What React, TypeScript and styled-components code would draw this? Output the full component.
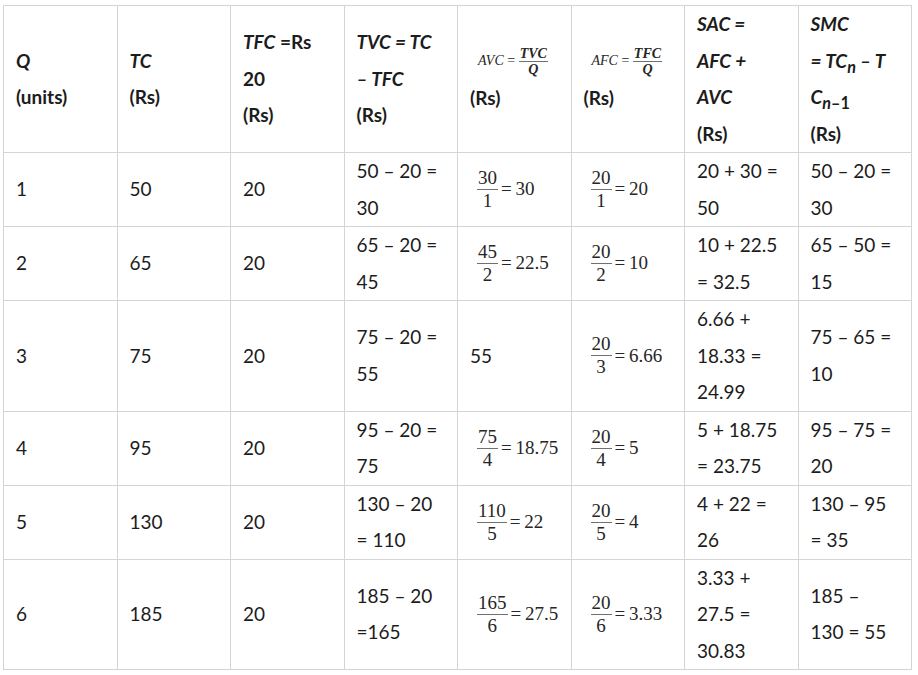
import React from 'react';
import styled, { createGlobalStyle } from 'styled-components';

const GlobalStyle = createGlobalStyle`
    html, body {
        margin: 0;
        padding: 0;
        background: #fff;
    }
    body {
        font-family: Lato, "Open Sans", sans-serif;
        color: #1c1c1c;
    }
`;

const Page = styled.div`
    padding: 5px 0 0 3px;
`;

const Table = styled.table`
    width: 909px;
    table-layout: fixed;
    border-collapse: collapse;
    font-size: 19px;
    line-height: 36.5px;
`;

const Cell = styled.td<{ $head?: boolean }>`
    border: 1px solid #d4d4d4;
    padding: 0 8px 0 12px;
    vertical-align: middle;
    white-space: nowrap;
    font-weight: ${(p) => (p.$head ? 700 : 400)};
`;

const Em = styled.i`
    font-style: italic;
    font-weight: 700;
`;

const Sub = styled.sub`
    font-size: 0.85em;
    line-height: 0;
    vertical-align: -0.3em;
`;

const Formula = styled.span<{ $small?: boolean }>`
    display: inline-flex;
    align-items: center;
    margin-left: ${(p) => (p.$small ? 8 : 7)}px;
    font-family: "Liberation Serif", "Times New Roman", serif;
    font-size: ${(p) => (p.$small ? 14 : 19)}px;
    font-weight: 400;
    color: #262626;
    vertical-align: middle;
`;

const Frac = styled.span<{ $small?: boolean }>`
    display: inline-flex;
    flex-direction: column;
    align-items: center;
    line-height: ${(p) => (p.$small ? 15 : 22)}px;
    margin-right: 3px;
`;

const Num = styled.span<{ $small?: boolean }>`
    padding: 0 1px;
    border-bottom: 1px solid #707070;
    font-style: ${(p) => (p.$small ? 'italic' : 'normal')};
    font-weight: ${(p) => (p.$small ? 700 : 400)};
`;

const Den = styled.span<{ $small?: boolean }>`
    font-style: ${(p) => (p.$small ? 'italic' : 'normal')};
    font-weight: ${(p) => (p.$small ? 700 : 400)};
`;

const Eq = styled.span`
    white-space: pre;
`;

const Fraction: React.FC<{ n: string; d: string; r: string }> = ({ n, d, r }) => (
    <Formula>
        <Frac>
            <Num>{n}</Num>
            <Den>{d}</Den>
        </Frac>
        <Eq>={'\u2009'}{r}</Eq>
    </Formula>
);

const HeadFormula: React.FC<{ name: string; top: string }> = ({ name, top }) => (
    <Formula $small>
        <i>{name}</i>
        <Eq> = </Eq>
        <Frac $small>
            <Num $small>{top}</Num>
            <Den $small>Q</Den>
        </Frac>
    </Formula>
);

const Lines: React.FC<{ lines: string[] }> = ({ lines }) => (
    <>
        {lines.map((l, i) => (
            <React.Fragment key={i}>
                {i > 0 && <br />}
                {l}
            </React.Fragment>
        ))}
    </>
);

type Row = {
    q: string;
    tc: string;
    tvc: string[];
    avc: React.ReactNode;
    afc: React.ReactNode;
    sac: string[];
    smc: string[];
};

const rows: Row[] = [
    {
        q: '1', tc: '50', tvc: ['50 – 20 =', '30'],
        avc: <Fraction n="30" d="1" r="30" />, afc: <Fraction n="20" d="1" r="20" />,
        sac: ['20 + 30 =', '50'], smc: ['50 – 20 =', '30'],
    },
    {
        q: '2', tc: '65', tvc: ['65 – 20 =', '45'],
        avc: <Fraction n="45" d="2" r="22.5" />, afc: <Fraction n="20" d="2" r="10" />,
        sac: ['10 + 22.5', '= 32.5'], smc: ['65 – 50 =', '15'],
    },
    {
        q: '3', tc: '75', tvc: ['75 – 20 =', '55'],
        avc: '55', afc: <Fraction n="20" d="3" r="6.66" />,
        sac: ['6.66 +', '18.33 =', '24.99'], smc: ['75 – 65 =', '10'],
    },
    {
        q: '4', tc: '95', tvc: ['95 – 20 =', '75'],
        avc: <Fraction n="75" d="4" r="18.75" />, afc: <Fraction n="20" d="4" r="5" />,
        sac: ['5 + 18.75', '= 23.75'], smc: ['95 – 75 =', '20'],
    },
    {
        q: '5', tc: '130', tvc: ['130 – 20', '= 110'],
        avc: <Fraction n="110" d="5" r="22" />, afc: <Fraction n="20" d="5" r="4" />,
        sac: ['4 + 22 =', '26'], smc: ['130 – 95', '= 35'],
    },
    {
        q: '6', tc: '185', tvc: ['185 – 20', '=165'],
        avc: <Fraction n="165" d="6" r="27.5" />, afc: <Fraction n="20" d="6" r="3.33" />,
        sac: ['3.33 +', '27.5 =', '30.83'], smc: ['185 –', '130 = 55'],
    },
];

const App: React.FC = () => (
    <Page>
        <GlobalStyle />
        <Table>
            <tbody>
                <tr>
                    <Cell $head><Em>Q</Em><br />(units)</Cell>
                    <Cell $head><Em>TC</Em><br />(Rs)</Cell>
                    <Cell $head><Em>TFC</Em> =Rs<br />20<br />(Rs)</Cell>
                    <Cell $head><Em>TVC = TC</Em><br /><Em>– TFC</Em><br />(Rs)</Cell>
                    <Cell $head><HeadFormula name="AVC" top="TVC" /><br />(Rs)</Cell>
                    <Cell $head><HeadFormula name="AFC" top="TFC" /><br />(Rs)</Cell>
                    <Cell $head><Em>SAC =</Em><br /><Em>AFC +</Em><br /><Em>AVC</Em><br />(Rs)</Cell>
                    <Cell $head>
                        <Em>SMC</Em><br />
                        <Em>= TC<Sub>n</Sub> – T</Em><br />
                        <Em>C<Sub>n</Sub></Em><Sub>–1</Sub><br />
                        (Rs)
                    </Cell>
                </tr>
                {rows.map((r) => (
                    <tr key={r.q}>
                        <Cell>{r.q}</Cell>
                        <Cell>{r.tc}</Cell>
                        <Cell>20</Cell>
                        <Cell><Lines lines={r.tvc} /></Cell>
                        <Cell>{r.avc}</Cell>
                        <Cell>{r.afc}</Cell>
                        <Cell><Lines lines={r.sac} /></Cell>
                        <Cell><Lines lines={r.smc} /></Cell>
                    </tr>
                ))}
            </tbody>
        </Table>
    </Page>
);

export default App;
